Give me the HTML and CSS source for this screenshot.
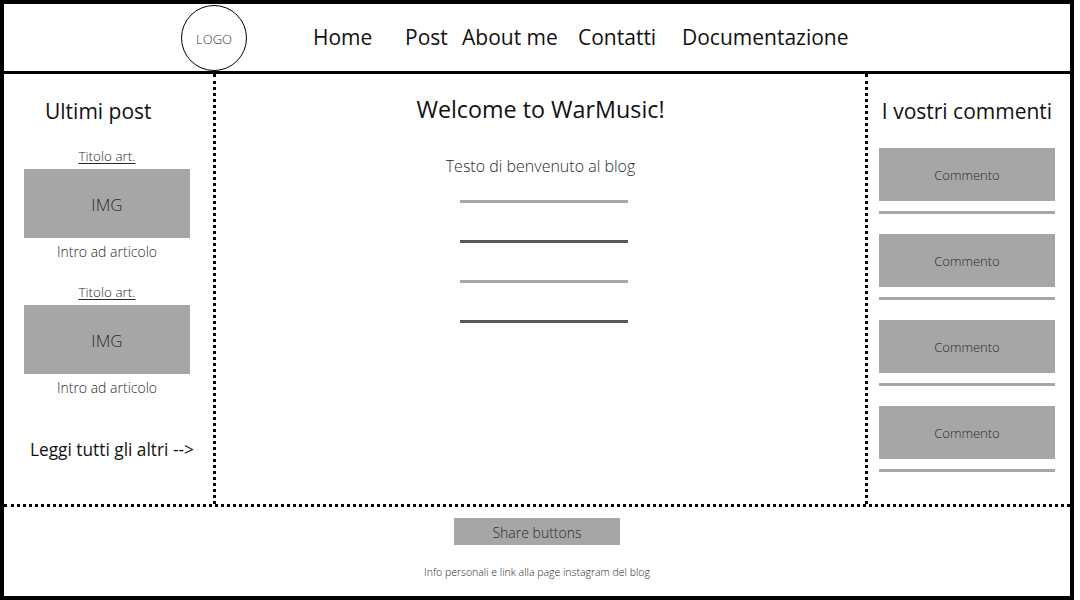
FILE: index.html
```html
<!DOCTYPE html>
<html lang="it">
<head>
<meta charset="utf-8">
<title>WarMusic</title>
<link rel="stylesheet" href="styles.css">
</head>
<body>
<div class="frame">
  <header class="header">
    <div class="logo">LOGO</div>
    <nav class="nav">
      <a class="nav-link nav-home">Home</a>
      <a class="nav-link nav-post">Post</a>
      <a class="nav-link nav-about">About me</a>
      <a class="nav-link nav-contatti">Contatti</a>
      <a class="nav-link nav-doc">Documentazione</a>
    </nav>
  </header>
  <main class="main">
    <aside class="col-left">
      <h2 class="side-title side-title-left">Ultimi post</h2>
      <article class="post">
        <a class="post-title">Titolo art.</a>
        <div class="img-box">IMG</div>
        <p class="post-intro">Intro ad articolo</p>
      </article>
      <article class="post">
        <a class="post-title">Titolo art.</a>
        <div class="img-box">IMG</div>
        <p class="post-intro">Intro ad articolo</p>
      </article>
      <a class="read-all">Leggi tutti gli altri --&gt;</a>
    </aside>
    <section class="col-center">
      <h1 class="welcome">Welcome to WarMusic!</h1>
      <p class="welcome-text">Testo di benvenuto al blog</p>
      <div class="lines">
        <div class="line line-light"></div>
        <div class="line line-dark"></div>
        <div class="line line-light"></div>
        <div class="line line-dark"></div>
      </div>
    </section>
    <aside class="col-right">
      <h2 class="side-title">I vostri commenti</h2>
      <div class="comment"><div class="comment-box">Commento</div><div class="comment-line"></div></div>
      <div class="comment"><div class="comment-box">Commento</div><div class="comment-line"></div></div>
      <div class="comment"><div class="comment-box">Commento</div><div class="comment-line"></div></div>
      <div class="comment"><div class="comment-box">Commento</div><div class="comment-line"></div></div>
    </aside>
  </main>
  <footer class="footer">
    <div class="share">Share buttons</div>
    <p class="info">Info personali e link alla page instagram del blog</p>
  </footer>
</div>
</body>
</html>
```

FILE: styles.css
```css
* { box-sizing: border-box; }
html, body { margin: 0; padding: 0; background: #fff; }
body {
  font-family: "Open Sans", "DejaVu Sans", sans-serif;
  color: #000;
  width: 1080px;
  height: 600px;
  overflow: hidden;
}
p, h1, h2 { margin: 0; font-weight: 400; }
a { color: inherit; text-decoration: none; }

.frame {
  width: 1074px;
  height: 600px;
  border: 4px solid #000;
  display: flex;
  flex-direction: column;
}

/* header */
.header {
  height: 70px;
  flex: none;
  border-bottom: 3px solid #000;
  display: flex;
  align-items: flex-end;
  padding-left: 177px;
}
.logo {
  width: 66px;
  height: 66px;
  border: 1px solid #000;
  border-radius: 50%;
  display: flex;
  align-items: center;
  justify-content: center;
  font-size: 13px;
  font-weight: 300;
  color: #333;
  padding-top: 1px;
}
.nav {
  display: flex;
  align-self: center;
  margin-left: 66px;
  margin-bottom: 1px;
}
.nav-link {
  font-size: 21px;
  line-height: 28px;
  color: #111;
  white-space: nowrap;
}
.nav-home { width: 92px; }
.nav-post { width: 57px; }
.nav-about { width: 116px; }
.nav-contatti { width: 104px; }

/* main */
.main {
  height: 433px;
  flex: none;
  display: flex;
  border-bottom: 3px dotted #000;
}
.col-left {
  width: 212px;
  flex: none;
  border-right: 3px dotted #000;
  padding: 23px 23px 0 20px;
  display: flex;
  flex-direction: column;
}
.side-title {
  font-size: 21px;
  line-height: 28px;
  color: #111;
  text-align: center;
  white-space: nowrap;
}
.side-title-left {
  text-align: left;
  padding-left: 21px;
}
.post {
  display: flex;
  flex-direction: column;
  align-items: center;
  margin-top: 22px;
}
.post + .post { margin-top: 21px; }
.post-title {
  font-size: 13.5px;
  line-height: 18px;
  font-weight: 300;
  color: #2a2a2a;
  text-decoration: underline;
  text-underline-offset: 2px;
}
.img-box {
  margin-top: 4px;
  width: 166px;
  height: 69px;
  background: #a6a6a6;
  font-size: 17px;
  line-height: 71px;
  font-weight: 300;
  color: #2a2a2a;
  text-align: center;
}
.post-intro {
  margin-top: 4px;
  font-size: 14px;
  line-height: 20px;
  font-weight: 300;
  color: #2a2a2a;
}
.read-all {
  margin-top: 40px;
  margin-left: 6px;
  font-size: 17.3px;
  line-height: 24px;
  color: #111;
  white-space: nowrap;
}

.col-center {
  flex: 1;
  display: flex;
  flex-direction: column;
  align-items: center;
  padding-top: 19px;
}
.welcome {
  font-size: 23.3px;
  line-height: 32px;
  color: #111;
}
.welcome-text {
  margin-top: 30px;
  font-size: 16px;
  line-height: 22px;
  font-weight: 300;
  color: #2a2a2a;
}
.lines {
  margin-top: 23px;
  margin-left: 7px;
  display: flex;
  flex-direction: column;
  gap: 37px;
}
.line {
  width: 168px;
  height: 3px;
}
.line-light { background: #a6a6a6; }
.line-dark { background: #595959; }

.col-right {
  width: 205px;
  flex: none;
  border-left: 3px dotted #000;
  padding: 23px 15px 0 11px;
  display: flex;
  flex-direction: column;
}
.comment {
  margin-top: 20px;
}
.comment:first-of-type { margin-top: 23px; }
.comment-box {
  height: 53px;
  background: #a6a6a6;
  font-size: 13px;
  line-height: 54px;
  font-weight: 300;
  color: #2a2a2a;
  text-align: center;
}
.comment-line {
  margin-top: 10px;
  height: 3px;
  background: #a6a6a6;
}

/* footer */
.footer {
  flex: 1;
  display: flex;
  flex-direction: column;
  align-items: center;
  padding-top: 11px;
}
.share {
  width: 166px;
  height: 27px;
  background: #a6a6a6;
  font-size: 14px;
  line-height: 29px;
  font-weight: 300;
  color: #2a2a2a;
  text-align: center;
}
.info {
  margin-top: 20px;
  font-size: 10.5px;
  line-height: 14px;
  font-weight: 300;
  color: #2a2a2a;
}
```
